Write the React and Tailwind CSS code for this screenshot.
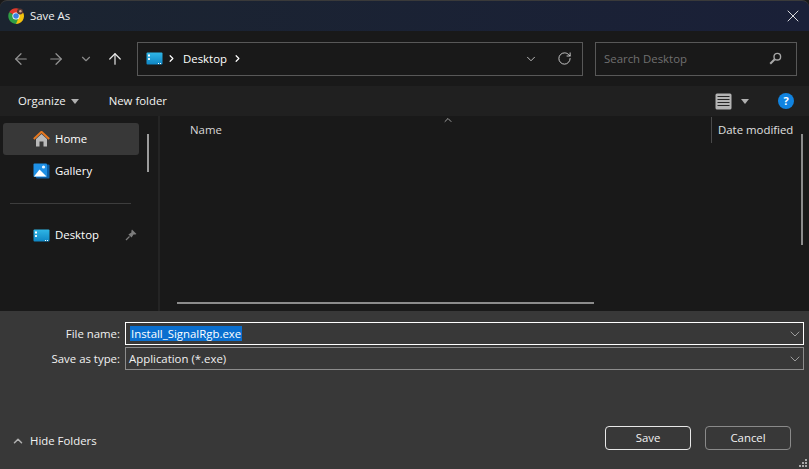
import React from 'react';
import { ArrowLeft, ArrowRight, ArrowUp, ChevronDown, ChevronRight, ChevronUp, RotateCw, X } from 'lucide-react';

const font = { fontFamily: '"Open Sans", "Noto Sans", sans-serif' };

function ChromeIcon() {
  return (
    <svg width="16" height="16" viewBox="0 0 16 16">
      <path d="M8 8 L1.2 4.2 A8 8 0 0 1 15.4 5 L8 5 Z" fill="#e0392b" />
      <path d="M8 8 L8 16 A8 8 0 0 0 15.4 5 L8 5 Z" fill="#f4c20d" />
      <path d="M8 8 L1.2 4.2 A8 8 0 0 0 8 16 L10.5 10 Z" fill="#2f9e44" />
      <circle cx="8" cy="8" r="3.6" fill="#fff" />
      <circle cx="8" cy="8" r="2.8" fill="#3b82e0" />
      <circle cx="12" cy="3.6" r="3" fill="#5a3a34" />
      <circle cx="12.4" cy="3.2" r="1.2" fill="#d9a58c" />
    </svg>
  );
}

function DesktopIcon() {
  return (
    <svg width="17" height="13" viewBox="0 0 17 13">
      <defs>
        <linearGradient id="desk" x1="0" y1="0" x2="0" y2="1">
          <stop offset="0" stopColor="#2fb6e6" />
          <stop offset="1" stopColor="#0f86c4" />
        </linearGradient>
      </defs>
      <rect x="0.5" y="0.5" width="16" height="12" rx="1" fill="url(#desk)" />
      <rect x="2" y="2.5" width="2" height="2" fill="#fff" />
      <rect x="2" y="6" width="2" height="2" fill="#dff4fc" />
      <rect x="12" y="11" width="1" height="1" fill="#fff" />
      <rect x="14" y="11" width="1" height="1" fill="#fff" />
    </svg>
  );
}

function HomeIcon() {
  return (
    <svg width="17" height="16" viewBox="0 0 17 16">
      <path d="M3 8 L8.5 3 L14 8 V15.5 H10.5 V10.5 H6.5 V15.5 H3 Z" fill="#b9b9b9" />
      <path d="M0.8 8 L8.5 0.8 L16.2 8" fill="none" stroke="#e8781e" strokeWidth="2" />
    </svg>
  );
}

function GalleryIcon() {
  return (
    <svg width="17" height="16" viewBox="0 0 17 16">
      <rect x="3" y="1.5" width="13.5" height="14" rx="1" fill="#0b5fa8" />
      <rect x="0.5" y="0.5" width="13.5" height="13.5" rx="1" fill="#1e90e6" />
      <circle cx="10.5" cy="4" r="1.6" fill="#e6f4ff" />
      <path d="M1 13.5 L6.5 6.5 L13.5 13.5 Z" fill="#ffffff" />
    </svg>
  );
}

function PinIcon() {
  return (
    <svg width="12" height="12" viewBox="0 0 12 12">
      <path d="M7 0.5 L11.5 5 L10.3 5.6 L8.5 5.6 L6.6 8.6 L3.4 5.4 L6.4 3.5 L6.4 1.7 Z" fill="#7c7c7c" />
      <path d="M4.5 7.5 L1 11" stroke="#7c7c7c" strokeWidth="1.2" />
    </svg>
  );
}

function SearchIcon() {
  return (
    <svg width="13" height="13" viewBox="0 0 13 13" fill="none">
      <circle cx="8.3" cy="4.7" r="3.3" stroke="#a8a8a8" strokeWidth="1.4" />
      <path d="M5.7 7.3 L1.2 11.8" stroke="#a8a8a8" strokeWidth="2" />
    </svg>
  );
}

function ViewIcon() {
  return (
    <svg width="17" height="17" viewBox="0 0 17 17">
      <rect x="0.5" y="0.5" width="16" height="16" rx="1.5" fill="#b4b4b4" />
      <path d="M2.5 3.5 H14.5 M2.5 6.5 H14.5 M2.5 9.5 H14.5 M2.5 12.5 H14.5" stroke="#262626" strokeWidth="1" />
    </svg>
  );
}

function Caret() {
  return <span className="block w-0 h-0 border-l-[4px] border-r-[4px] border-t-[5px] border-l-transparent border-r-transparent border-t-[#b0b0b0]" />;
}

function NavItem({ icon, label, active, pin }) {
  return (
    <div className={`h-[32px] w-[136px] rounded-[3px] flex items-center relative ${active ? 'bg-[#383838]' : ''}`}>
      <span className="w-[21px] ml-[30px] flex items-center shrink-0">{icon}</span>
      <span className="text-white ml-[1px]">{label}</span>
      {pin && <span className="absolute right-[2px] top-[10px]"><PinIcon /></span>}
    </div>
  );
}

function FormRow({ label, border, children }) {
  return (
    <div className="flex items-center h-[23px]">
      <label className="w-[120px] text-right text-[#f2f2f2]">{label}</label>
      <div className={`ml-[5px] w-[679px] h-[23px] border ${border} flex items-center pl-[3px] justify-between`}>
        {children}
        <ChevronDown size={16} strokeWidth={1.2} className="text-[#b5b5b5]" />
      </div>
    </div>
  );
}

export default function App() {
  return (
    <div className="w-[809px] h-[469px] flex flex-col overflow-hidden bg-[#191919] text-[11.4px] leading-[16px] relative" style={font}>
      {/* title bar */}
      <div className="h-[31px] shrink-0 flex items-center justify-between pl-[8px] pr-[6px] bg-gradient-to-r from-[#1b2430] to-[#1a2038] border-t border-[#3a3a3a] rounded-t-[7px]">
        <div className="flex items-center gap-[6px]">
          <ChromeIcon />
          <span className="text-[#f2f2f2]">Save As</span>
        </div>
        <X size={20} strokeWidth={1} className="text-white" />
      </div>

      {/* nav bar */}
      <div className="h-[55px] shrink-0 flex items-center pl-[12px] bg-[#191919]">
        <ArrowLeft size={18} strokeWidth={1.6} className="text-[#949494]" />
        <ArrowRight size={18} strokeWidth={1.6} className="text-[#949494] ml-[17px]" />
        <ChevronDown size={14} strokeWidth={2} className="text-[#8a8a8a] ml-[14px]" />
        <ArrowUp size={18} strokeWidth={1.6} className="text-[#e6e6e6] ml-[13px]" />
        <div className="ml-[13px] w-[446px] h-[34px] border border-[#585858] flex items-center pl-[8px] pr-[10px]">
          <DesktopIcon />
          <ChevronRight size={11} strokeWidth={2.6} className="text-white ml-[3px]" />
          <span className="text-white ml-[6px]">Desktop</span>
          <ChevronRight size={11} strokeWidth={2.6} className="text-white ml-[5px]" />
          <ChevronDown size={14} strokeWidth={1.5} className="text-[#d0d0d0] ml-auto" />
          <RotateCw size={15} strokeWidth={1.5} className="text-[#d0d0d0] ml-[19px]" />
        </div>
        <div className="ml-[12px] w-[202px] h-[34px] border border-[#585858] flex items-center justify-between pl-[8px] pr-[14px]">
          <span className="text-[#707070]">Search Desktop</span>
          <SearchIcon />
        </div>
      </div>

      {/* toolbar */}
      <div className="h-[30px] shrink-0 flex items-center pl-[18px] pr-[15px] bg-[#202020]">
        <span className="text-[#f2f2f2]">Organize</span>
        <span className="ml-[5px]"><Caret /></span>
        <span className="text-[#f2f2f2] ml-[30px]">New folder</span>
        <div className="ml-auto flex items-center">
          <ViewIcon />
          <span className="ml-[9px] mr-[29px]"><Caret /></span>
          <span className="w-[16px] h-[16px] rounded-full bg-[#1083e0] text-white text-[11px] font-bold flex items-center justify-center">?</span>
        </div>
      </div>

      {/* main area */}
      <div className="flex-1 flex min-h-0 relative">
        <div className="w-[158px] shrink-0 pt-[7px] pl-[3px] relative">
          <NavItem icon={<HomeIcon />} label="Home" active />
          <NavItem icon={<GalleryIcon />} label="Gallery" />
          <div className="h-px w-[121px] bg-[#3d3d3d] ml-[7px] mt-[16px] mb-[15px]" />
          <NavItem icon={<DesktopIcon />} label="Desktop" pin />
          <div className="absolute left-[147px] top-[18px] w-[2px] h-[38px] bg-[#9c9c9c]" />
        </div>
        <div className="w-[2px] shrink-0 bg-[#242424]" />
        <div className="flex-1 relative">
          <div className="h-[26px] flex items-center text-[#d8d8d8] pt-[2px]">
            <span className="ml-[30px] text-[#d8d8d8]">Name</span>
            <div className="ml-auto w-[98px] h-[26px] flex items-center border-l border-[#4a4a4a] pl-[6px] pb-[1px]">
              <span className="text-[#e0e0e0]">Date modified</span>
            </div>
          </div>
          <ChevronUp size={12} strokeWidth={1.8} className="absolute left-[282px] top-[-2px] text-[#b0b0b0]" />
          <div className="absolute right-[6px] top-[18px] w-[2px] h-[111px] bg-[#8c8c8c]" />
          <div className="absolute left-[17px] top-[186px] h-[2px] w-[417px] bg-[#8c8c8c]" />
        </div>
      </div>

      {/* save form */}
      <div className="h-[158px] shrink-0 bg-[#383838] pt-[11px] flex flex-col relative">
        <div className="flex flex-col gap-[2px]">
          <FormRow label="File name:" border="border-white">
            <span className="bg-[#0a6fcf] text-white ml-[1px] px-[1px] h-[15px] leading-[15px]">Install_SignalRgb.exe</span>
          </FormRow>
          <FormRow label="Save as type:" border="border-[#8c8c8c]">
            <span className="text-[#f0f0f0]">Application (*.exe)</span>
          </FormRow>
        </div>
        <div className="mt-[56px] flex items-center pl-[11px] pr-[18px]">
          <ChevronUp size={14} strokeWidth={2.6} className="text-[#b0b0b0] mt-[6px]" />
          <span className="text-[#f2f2f2] ml-[5px] mt-[6px]">Hide Folders</span>
          <button className="ml-auto w-[86px] h-[24px] rounded-[4px] border border-[#e8e8e8] text-[#f2f2f2]">Save</button>
          <button className="ml-[14px] w-[86px] h-[24px] rounded-[4px] border border-[#8a8a8a] text-[#f2f2f2]">Cancel</button>
        </div>
        <svg width="10" height="10" viewBox="0 0 10 10" className="absolute right-[1px] bottom-[1px]">
          <path d="M7 1h2v2H7zM4 4h2v2H4zM7 4h2v2H7zM1 7h2v2H1zM4 7h2v2H4zM7 7h2v2H7z" fill="#a8a8a8" />
        </svg>
      </div>
    </div>
  );
}
